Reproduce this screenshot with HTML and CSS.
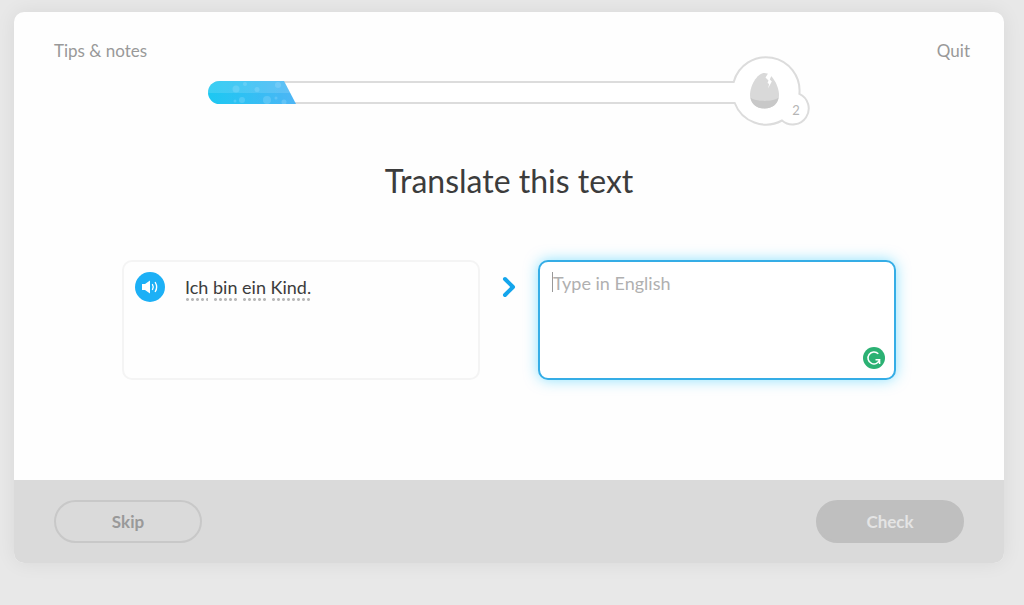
FILE: index.html
```html
<!DOCTYPE html>
<html lang="en">
<head>
<meta charset="utf-8">
<meta name="viewport" content="width=device-width, initial-scale=1">
<title>Translate this text</title>
<link rel="stylesheet" href="styles.css">
</head>
<body>
<div class="lesson">
  <main class="lesson-main">
    <header class="lesson-header">
      <a class="nav-link tips" href="#">Tips &amp; notes</a>
      <svg class="progress" viewBox="0 0 602 70" role="img" aria-label="Lesson progress">
        <defs>
          <linearGradient id="fill" x1="0" x2="1"><stop offset="0" stop-color="#1cc8f2"/><stop offset="1" stop-color="#4fb5f5"/></linearGradient>
          <clipPath id="bar"><path d="M11.500 25H76L88 48H11.500A11.500 11.500 0 0 1 11.500 25Z"/></clipPath>
        </defs>
        <path class="track" d="M12 26H525.700A33.500 33.500 0 0 1 591.400 37.800A16.100 16.100 0 1 1 574 64.500A33.500 33.500 0 0 1 526.700 47H12A10.500 10.500 0 0 1 12 26Z"/>
        <g clip-path="url(#bar)">
          <rect y="25" width="90" height="23" fill="url(#fill)"/>
          <rect y="25" width="90" height="12" fill="#fff" opacity=".13"/>
          <g fill="#b4e6ff" opacity=".24">
            <circle cx="28" cy="33" r="3.500"/><circle cx="49" cy="33.500" r="2.500"/><circle cx="70" cy="29" r="3"/>
            <circle cx="59" cy="44" r="4"/><circle cx="34" cy="44" r="3"/><circle cx="27" cy="45" r="1.500"/>
            <circle cx="68" cy="42" r="1.500"/><circle cx="76" cy="46" r="2.500"/><circle cx="37" cy="28" r="2"/>
          </g>
        </g>
        <path fill="#d9d9d9" d="M556.500 17C549 17 542 30 542 39C542 47 548 52.500 556.500 52.500S571 47 571 39C571 30 564 17 556.500 17Z"/>
        <path fill="#c8c8c8" d="M542.500 41.500C547 46 566 46 570.500 41.500C569.500 48.500 564 52.500 556.500 52.500S543.500 48.500 542.500 41.500Z"/>
        <path fill="#fff" d="M561 16L557.500 21.500L560.500 24.500L559.500 27L561.200 28L560 32.500L563.800 25.500L561.800 23.500L563.500 19.500Z"/>
        <text class="count" x="588" y="59" text-anchor="middle">2</text>
      </svg>
      <a class="nav-link quit" href="#">Quit</a>
    </header>
    <h1 class="title"><label for="answer">Translate this text</label></h1>
    <div class="exercise">
      <section class="prompt">
        <button class="listen" type="button" aria-label="Listen">
          <svg class="icon" viewBox="0 0 30 30">
            <path fill="#fff" d="M7 12H10L15 8.500V21.500L10 18H7Z"/>
            <path fill="none" stroke="#fff" stroke-width="1.400" stroke-linecap="round" d="M17.500 12.500Q19 15 17.500 17.500M20.300 10.500Q23 15 20.300 19.500"/>
          </svg>
        </button>
        <p class="sentence" lang="de"><span class="word">Ich</span> <span class="word">bin</span> <span class="word">ein</span> <span class="word">Kind.</span></p>
      </section>
      <svg class="arrow" viewBox="0 0 16 24" aria-hidden="true"><path d="M4 4L12 12L4 20"/></svg>
      <div class="answer-box">
        <textarea class="answer" id="answer" placeholder="Type in English"></textarea>
        <span class="caret"></span>
        <svg class="checker" viewBox="0 0 22 22" aria-hidden="true">
          <circle cx="11" cy="11" r="11" fill="#2bb173"/>
          <path d="M15.300 6.800A6 6 0 1 0 16.800 12.500M12.500 12.700H16.600V17" fill="none" stroke="#fff" stroke-width="1.500"/>
        </svg>
      </div>
    </div>
  </main>
  <footer class="lesson-footer">
    <button class="button skip" type="button">Skip</button>
    <button class="button check" type="button">Check</button>
  </footer>
</div>
</body>
</html>
```
FILE: styles.css
```css
* { box-sizing: border-box; }

body {
  margin: 0;
  padding: 12px 20px 42px 14px;
  background: #e8e8e8;
  font-family: Lato, "Open Sans", sans-serif;
  font-size: 17px;
  line-height: 24px;
  color: #3c3c3c;
}

.lesson {
  border-radius: 10px;
  background: #fefefe;
  box-shadow: 0 0 20px rgba(0, 0, 0, 0.07);
}

.lesson-main { padding: 27px 34px 100px; }

.lesson-header {
  display: grid;
  grid-template-columns: 1fr minmax(0, 602px) 1fr;
  align-items: start;
}

.nav-link { color: #999; text-decoration: none; }
.tips { padding-left: 6px; }
.quit { text-align: right; }

.progress { display: block; width: 100%; margin-top: 17px; }
.track { fill: #fff; stroke: #dcdcdc; stroke-width: 2; }
.count { fill: #b5b5b5; font-size: 13px; }

.title {
  margin: 35px 0 59px;
  font-size: 32px;
  font-weight: 400;
  line-height: 40px;
  text-align: center;
}

.exercise {
  display: grid;
  grid-template-columns: 1fr 58px 1fr;
  max-width: 774px;
  margin: 0 auto;
}

.prompt {
  display: flex;
  align-items: flex-start;
  gap: 20px;
  min-height: 120px;
  padding: 10px 11px;
  border: 2px solid #f4f4f4;
  border-radius: 10px;
}

.listen {
  width: 30px;
  height: 30px;
  padding: 0;
  border: 0;
  border-radius: 50%;
  background: #1cb0f6;
}
.icon { display: block; }

.sentence { margin: 3px 0 0; font-size: 18px; }
.word {
  display: inline-block;
  padding-bottom: 2px;
  background: radial-gradient(circle, #b8b8b8 1px, transparent 2px) left bottom / 5px 3px repeat-x;
}

.arrow { width: 16px; height: 24px; margin-top: 15px; justify-self: center; }
.arrow path {
  fill: none;
  stroke: #14a5ec;
  stroke-width: 4;
  stroke-linecap: round;
  stroke-linejoin: round;
}

.answer-box { position: relative; display: flex; }
.answer {
  width: 100%;
  padding: 9px 13px;
  border: 2px solid #35ade6;
  border-radius: 10px;
  outline: 0;
  background: #fff;
  box-shadow: 0 0 14px rgba(28, 200, 255, 0.5);
  font: inherit;
  font-size: 18px;
  color: #3c3c3c;
  resize: none;
}
.answer::placeholder { color: #b0b0b0; opacity: 1; }
.caret {
  position: absolute;
  top: 12px;
  left: 14px;
  width: 1px;
  height: 20px;
  background: #999;
}
.checker { position: absolute; right: 11px; bottom: 11px; width: 22px; height: 22px; }

.lesson-footer {
  display: flex;
  justify-content: space-between;
  padding: 20px 40px;
  border-radius: 0 0 10px 10px;
  background: #dadada;
}

.button {
  width: 148px;
  height: 43px;
  border: 2px solid #c8c8c8;
  border-radius: 22px;
  background: transparent;
  font: inherit;
  font-weight: 700;
  color: #999;
}
.check { border-color: #bfbfbf; background: #bfbfbf; color: #e4e4e4; }
```
